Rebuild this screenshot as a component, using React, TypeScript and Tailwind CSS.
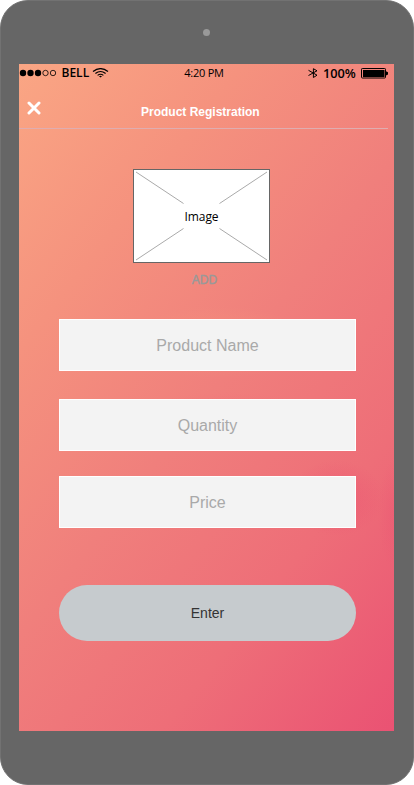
const fields = [
  { name: "Product Name", spacing: "mt-[28px]" },
  { name: "Quantity", spacing: "mt-[28px]" },
  { name: "Price", spacing: "mt-[25px]" },
];

function StatusBar() {
  return (
    <div className="flex h-[18px] items-center font-['Open_Sans','Noto_Sans',sans-serif] text-black">
      <div className="flex w-[144px] items-center">
        <svg className="h-[8px] w-[38px]" viewBox="0 0 38 8">
          <circle cx="4" cy="4" r="3.2" />
          <circle cx="11.5" cy="4" r="3.2" />
          <circle cx="19" cy="4" r="3.2" />
          <circle cx="26.5" cy="4" r="2.7" fill="none" stroke="black" strokeWidth="0.8" />
          <circle cx="34" cy="4" r="2.7" fill="none" stroke="black" strokeWidth="0.8" />
        </svg>
        <span className="ml-[4.5px] w-[27px] text-[12px] font-semibold leading-[18px]">BELL</span>
        <svg className="ml-[3px] h-[10px] w-[17px]" viewBox="0 0 17 10" fill="none" stroke="black">
          <path d="M1 3.4Q8.5 -2.2 16 3.4" strokeWidth="1.2" />
          <path d="M3.4 5.5Q8.5 1.5 13.6 5.5" strokeWidth="1.2" />
          <path d="M5.6 7.4Q8.5 5.1 11.4 7.4" strokeWidth="1.2" />
          <path d="M7 8.2Q8.5 7.4 10 8.2L8.5 9.6Z" fill="black" stroke="none" />
        </svg>
      </div>
      <span className="w-[82px] text-center text-[11px] leading-[18px] tracking-[-0.25px]">4:20 PM</span>
      <div className="flex flex-1 items-center justify-end pr-[6px]">
        <svg className="h-[10px] w-[10px]" viewBox="0 0 10 10" fill="none" stroke="black" strokeWidth="1">
          <path d="M0.5 2.3L9 7.2L5.4 9.5V0.7L9 2.8L0.5 7.5" />
        </svg>
        <span className="ml-[5px] flex w-[33px] pt-px">
          <span className="origin-left scale-x-[1.06] text-[12px] font-semibold leading-[18px]">100%</span>
        </span>
        <svg className="ml-[5px] h-[11px] w-[27px]" viewBox="0 0 27 11">
          <rect x="0.5" y="0.5" width="24" height="9.5" rx="0.8" fill="none" stroke="black" />
          <rect x="2" y="2" width="21.5" height="7" />
          <path d="M25 3.3L27 4.3V6.5L25 7.5Z" />
        </svg>
      </div>
    </div>
  );
}

function ImagePlaceholder() {
  return (
    <div className="relative mx-auto flex h-[94px] w-[137px] items-center justify-center border border-[#666] bg-white">
      <svg className="absolute inset-0 h-[92px] w-[135px]" viewBox="0 0 135 92" stroke="#aaa" strokeWidth="1">
        <path d="M2 2L49.5 33.5M133 2L85.5 33.5M2 90L49.5 58.5M133 90L85.5 58.5" />
      </svg>
      <span className="pt-[2px] font-['Open_Sans','Noto_Sans',sans-serif] text-[12px] leading-[18px] tracking-[-0.1px] text-black">Image</span>
    </div>
  );
}

export default function App() {
  return (
    <div className="h-[785px] w-[414px] bg-white font-['Liberation_Sans',Arial,sans-serif]">
      <div className="flex h-full flex-col rounded-[28px] border border-[#727272] bg-[#666] pl-[18px]">
        <div className="flex h-[63px] w-[375px] shrink-0 items-center justify-center">
          <span className="h-[7px] w-[7px] rounded-full bg-[#999]" />
        </div>
        <main className="h-[667px] w-[375px] shrink-0 bg-[radial-gradient(ellipse_48px_38px_at_318px_434px,rgba(234,75,112,0.38),transparent),radial-gradient(ellipse_16px_55px_at_375px_450px,rgba(234,75,112,0.25),transparent),radial-gradient(ellipse_95px_36px_at_200px_278px,rgba(249,160,125,0.35),transparent),radial-gradient(ellipse_90px_24px_at_210px_352px,rgba(238,100,118,0.25),transparent),linear-gradient(128deg,#faa684_0%,#f5927e_25%,#f07f7c_50%,#ee6e78_74%,#ea5273_100%)]">
          <StatusBar />
          <header className="flex h-[47px] w-[369px] items-center border-b border-[#dfadb0]">
            <button className="ml-[8px] mt-[5px] h-[14px] w-[14px]" aria-label="Close">
              <svg viewBox="0 0 14 14" stroke="white" strokeWidth="3" strokeLinecap="round">
                <path d="M2 2L12 12M12 2L2 12" />
              </svg>
            </button>
            <h1 className="ml-[100px] pt-[13px] text-[12px] font-bold leading-[14px] text-white">Product Registration</h1>
          </header>
          <div className="pt-[40px] pr-[10px]">
            <ImagePlaceholder />
          </div>
          <div className="mt-[10px] pr-[4px] text-center text-[12px] leading-[14px] text-[#999] [-webkit-text-stroke:0.4px_#999]">ADD</div>
          <form className="flex flex-col pr-[38px] pl-[40px] pt-[4px]">
            {fields.map((field) => (
              <input
                key={field.name}
                placeholder={field.name}
                className={`h-[52px] w-full border border-white bg-[#f3f3f3] pt-[2px] text-center text-[16px] text-[#333] outline-none placeholder:text-[#a9a9a9] ${field.spacing}`}
              />
            ))}
            <button type="button" className="mt-[57px] h-[56px] rounded-full bg-[#c6cbce] text-[14px] text-[#333]">
              Enter
            </button>
          </form>
        </main>
      </div>
    </div>
  );
}
